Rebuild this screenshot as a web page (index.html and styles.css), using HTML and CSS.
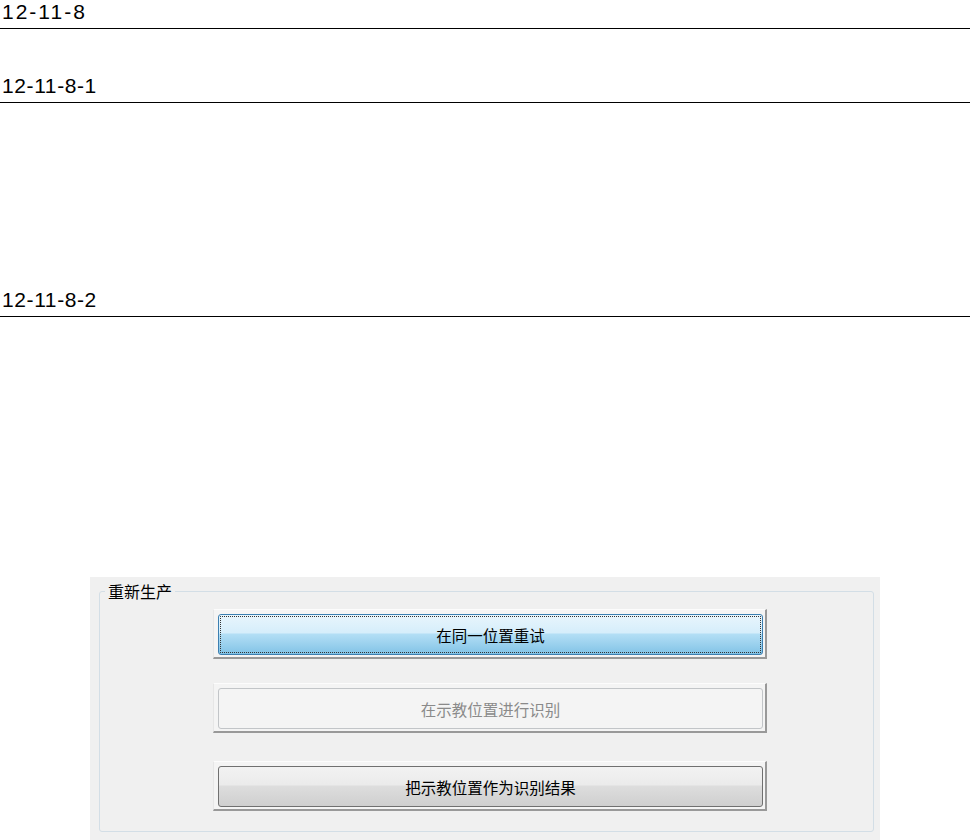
FILE: index.html
```html
<html>
<head>
    <meta charset="utf-8">
    <link rel="stylesheet" href="styles.css">
</head>
<body>
<h2 class="sec first">12-11-8</h2>
<h2 class="sec second">12-11-8-1</h2>
<h2 class="sec third">12-11-8-2</h2>

<div class="panel">
    <fieldset class="group">
        <legend>重新生产</legend>
        <div class="buttons">
            <div class="frame">
                <button class="btn hot" type="button">在同一位置重试</button>
            </div>
            <div class="frame gap1">
                <button class="btn" type="button" disabled>在示教位置进行识别</button>
            </div>
            <div class="frame gap2">
                <button class="btn" type="button">把示教位置作为识别结果</button>
            </div>
        </div>
    </fieldset>
</div>
</body>
</html>
```

FILE: styles.css
```css
body {margin:0; background:#fff; font-family:"Liberation Sans", Arial, sans-serif; color:#000;}

.sec {margin:0; font-size:21px; line-height:24px; font-weight:normal; padding:0 0 4px 2px; border-bottom:1px solid #000;}
.sec.first {letter-spacing:2px;}
.sec.second {margin-top:45px; letter-spacing:0.6px;}
.sec.third {margin-top:185px; letter-spacing:0.6px;}

.panel {margin:260px 0 0 90px; width:775px; background:#f0f0f0; padding:5px 6px 9px 9px;}
.group {margin:0; border:1px solid #d3dee6; border-radius:3px; padding:0 0 20px 5px;
    font-family:"Noto Sans CJK SC", sans-serif;}
.group legend {padding:0 3px; font-size:16px; line-height:18px; color:#000;}

.buttons {display:flex; flex-direction:column; align-items:flex-start; margin:9px 0 0 108px;}
.frame {box-sizing:border-box; width:554px; height:50px; background:#f4f4f4;
    border-top:1px solid #fcfcfc; border-left:1px solid #e6e6e6;
    border-right:2px solid #999; border-bottom:2px solid #999;
    padding:4px 2px 2px 4px;}
.frame.gap1 {margin-top:24px;}
.frame.gap2 {margin-top:28px;}

.btn {display:block; box-sizing:border-box; width:100%; height:41px; margin:0;
    font-family:"Noto Sans CJK SC", sans-serif; font-size:15.5px; color:#000;
    border:1px solid #707070; border-radius:3px;
    background:linear-gradient(#f2f2f2 0%, #ebebeb 45%, #dddddd 50%, #cfcfcf 100%);}
.btn.hot {border-color:#3c7fb1; outline:1px dotted #333; outline-offset:-3px;
    background:linear-gradient(#e8f5fc 0%, #d6eefb 45%, #b2def5 50%, #82c3e6 100%);}
.btn:disabled {border-color:#c2c5c8; background:#f4f4f4; color:#8a8a8a;}
```
